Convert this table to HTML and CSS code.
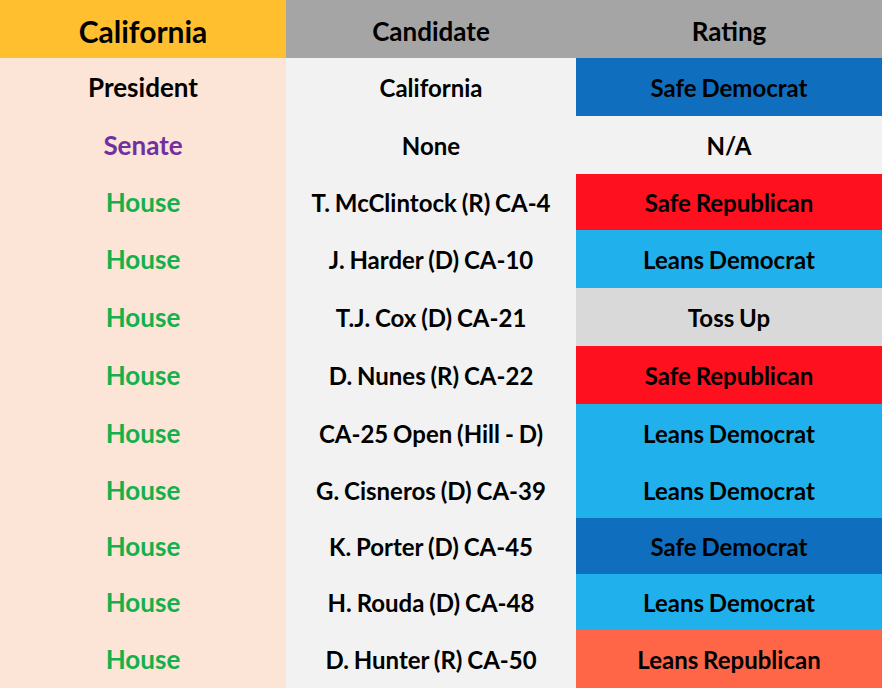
FILE: index.html
```html
<!DOCTYPE html>
<html>
<head>
<meta charset="utf-8">
<link rel="stylesheet" href="styles.css">
</head>
<body>
<div class="sheet">
  <div class="cell hd state">California</div>
  <div class="cell hd gray">Candidate</div>
  <div class="cell hd gray">Rating</div>

  <div class="cell c1 pres">President</div>
  <div class="cell c2">California</div>
  <div class="cell sd">Safe Democrat</div>

  <div class="cell c1 senate">Senate</div>
  <div class="cell c2">None</div>
  <div class="cell c2">N/A</div>

  <div class="cell c1 house">House</div>
  <div class="cell c2">T. McClintock (R) CA-4</div>
  <div class="cell sr">Safe Republican</div>

  <div class="cell c1 house">House</div>
  <div class="cell c2">J. Harder (D) CA-10</div>
  <div class="cell ld">Leans Democrat</div>

  <div class="cell c1 house">House</div>
  <div class="cell c2">T.J. Cox (D) CA-21</div>
  <div class="cell tu">Toss Up</div>

  <div class="cell c1 house">House</div>
  <div class="cell c2">D. Nunes (R) CA-22</div>
  <div class="cell sr">Safe Republican</div>

  <div class="cell c1 house">House</div>
  <div class="cell c2">CA-25 Open (Hill - D)</div>
  <div class="cell ld">Leans Democrat</div>

  <div class="cell c1 house">House</div>
  <div class="cell c2">G. Cisneros (D) CA-39</div>
  <div class="cell ld">Leans Democrat</div>

  <div class="cell c1 house">House</div>
  <div class="cell c2">K. Porter (D) CA-45</div>
  <div class="cell sd">Safe Democrat</div>

  <div class="cell c1 house">House</div>
  <div class="cell c2">H. Rouda (D) CA-48</div>
  <div class="cell ld">Leans Democrat</div>

  <div class="cell c1 house">House</div>
  <div class="cell c2">D. Hunter (R) CA-50</div>
  <div class="cell lr">Leans Republican</div>
</div>
</body>
</html>
```

FILE: styles.css
```css
html, body {
  margin: 0;
  padding: 0;
  background: #ffffff;
}

.sheet {
  display: grid;
  grid-template-columns: 286px 290px 306px;
  grid-template-rows: 58px 58px 58px 56px 58px 58px 58px 58px 56px 56px 56px 58px;
  width: 882px;
  height: 688px;
  font-family: Lato, "Open Sans", sans-serif;
  font-weight: 700;
  font-size: 24px;
  color: #000000;
}

.cell {
  display: flex;
  align-items: center;
  justify-content: center;
  white-space: nowrap;
  word-spacing: -1px;
}

.c1 {
  font-size: 26px;
}

.hd {
  font-size: 26px;
  padding-top: 3px;
}

.hd.state {
  font-size: 30px;
}

.state { background: #ffbf2f; }
.gray { background: #a5a5a5; }

.c1 { background: #fce4d6; }
.c2 { background: #f2f2f2; }

.pres { color: #000000; }
.senate { color: #7030a0; }
.house { color: #14b04c; }

.sd { background: #0f6fbe; }
.ld { background: #20b0ec; }
.sr { background: #fe101e; }
.tu { background: #d9d9d9; }
.lr { background: #ff6647; }
```
